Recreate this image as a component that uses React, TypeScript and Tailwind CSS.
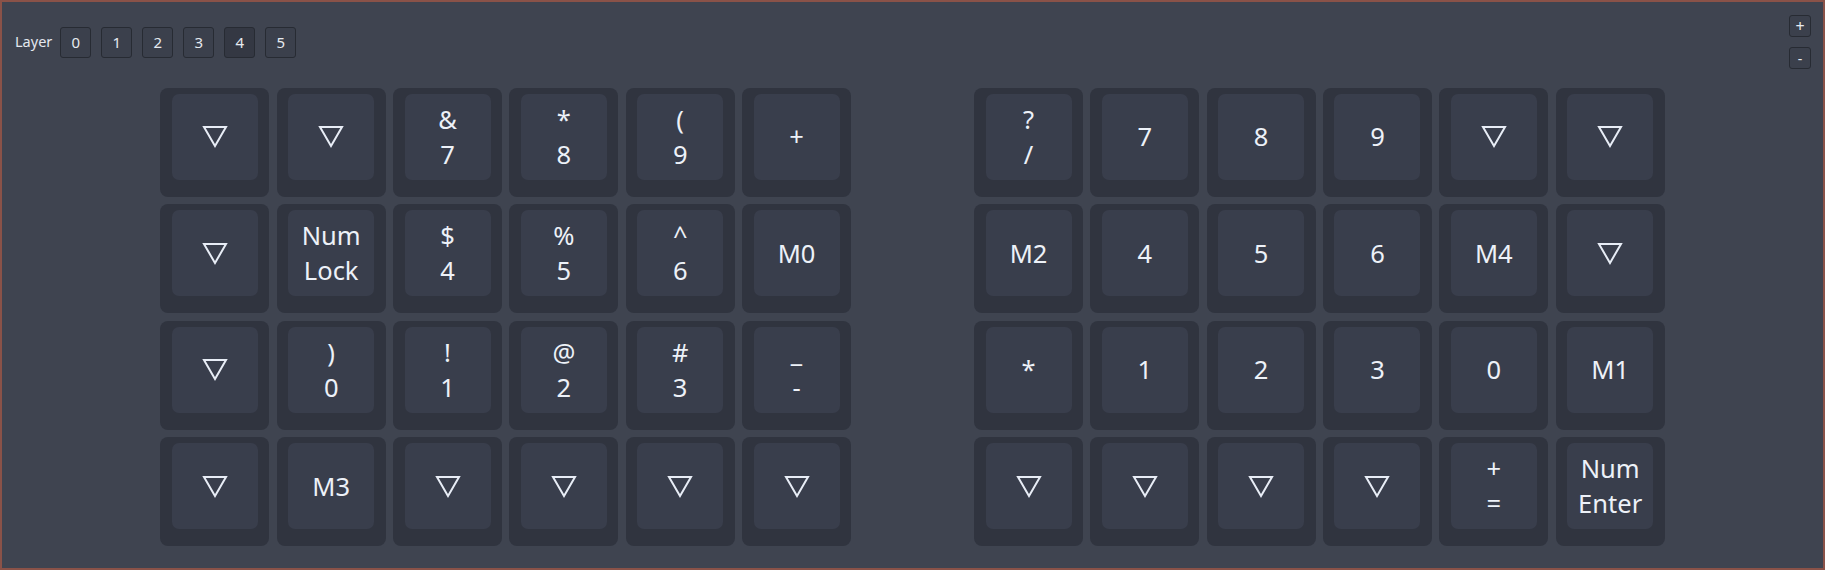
import React from 'react';

const TRI = '▽';

const leftKeys: string[][] = [
  [TRI, TRI, '&\n7', '*\n8', '(\n9', '+'],
  [TRI, 'Num\nLock', '$\n4', '%\n5', '^\n6', 'M0'],
  [TRI, ')\n0', '!\n1', '@\n2', '#\n3', '_\n-'],
  [TRI, 'M3', TRI, TRI, TRI, TRI],
];

const rightKeys: string[][] = [
  ['?\n/', '7', '8', '9', TRI, TRI],
  ['M2', '4', '5', '6', 'M4', TRI],
  ['*', '1', '2', '3', '0', 'M1'],
  [TRI, TRI, TRI, TRI, '+\n=', 'Num\nEnter'],
];

function Triangle() {
  return (
    <svg width="26" height="23" viewBox="0 0 26 23" fill="none">
      <polygon points="2,2 24,2 13,21" stroke="#e8edf6" strokeWidth="2" strokeLinejoin="miter" />
    </svg>
  );
}

function Key({ label }: { label: string }) {
  return (
    <div className="w-[109px] h-[109px] rounded-[8px] bg-[#30343f] flex justify-center pt-[6px]">
      <div className="w-[86px] h-[86px] rounded-[7px] bg-[#393e4c] flex items-center justify-center text-center whitespace-pre-line text-[25.5px] leading-[35px] text-[#edf1f8]">
        {label === TRI ? <Triangle /> : label}
      </div>
    </div>
  );
}

function KeyBlock({ rows }: { rows: string[][] }) {
  return (
    <div className="grid grid-cols-[repeat(6,109px)] gap-x-[7.33px] gap-y-[7.5px]">
      {rows.flat().map((k, i) => (
        <Key key={i} label={k} />
      ))}
    </div>
  );
}

function SmallButton({ children, active }: { children: React.ReactNode; active?: boolean }) {
  return (
    <button
      className={`w-[31px] h-[31px] rounded-[3px] border border-[#272b33] flex items-center justify-center text-[15px] text-[#e6eaf0] ${
        active ? 'bg-[#343843]' : 'bg-[#3b404c]'
      }`}
    >
      {children}
    </button>
  );
}

export default function App() {
  return (
    <div
      className="w-[1825px] h-[570px] border-2 border-[#8a5248] bg-[#3f4450] flex flex-col overflow-hidden"
      style={{ fontFamily: '"Noto Sans", "Open Sans", "DejaVu Sans", sans-serif' }}
    >
      {/* Header */}
      <div className="flex justify-between items-start pt-[13.3px] pl-[13px] pr-[12px]">
        <div className="flex items-center mt-[11.4px]">
          <span className="text-[14.5px] text-[#e4e8ef] mr-[8px]">Layer</span>
          <div className="flex gap-[10px]">
            {[0, 1, 2, 3, 4, 5].map((n) => (
              <SmallButton key={n} active={n === 4}>
                {n}
              </SmallButton>
            ))}
          </div>
        </div>
        <div className="flex flex-col gap-[10px]">
          <button className="w-[22px] h-[22px] rounded-[3px] border border-[#272b33] bg-[#3b404c] flex items-center justify-center text-[16px] text-[#e6eaf0]">
            +
          </button>
          <button className="w-[22px] h-[22px] rounded-[3px] border border-[#272b33] bg-[#3b404c] flex items-center justify-center text-[14px] text-[#e6eaf0]">
            -
          </button>
        </div>
      </div>

      {/* Keyboard */}
      <div className="flex justify-center gap-[123px] mt-[18.6px]">
        <KeyBlock rows={leftKeys} />
        <KeyBlock rows={rightKeys} />
      </div>
    </div>
  );
}
